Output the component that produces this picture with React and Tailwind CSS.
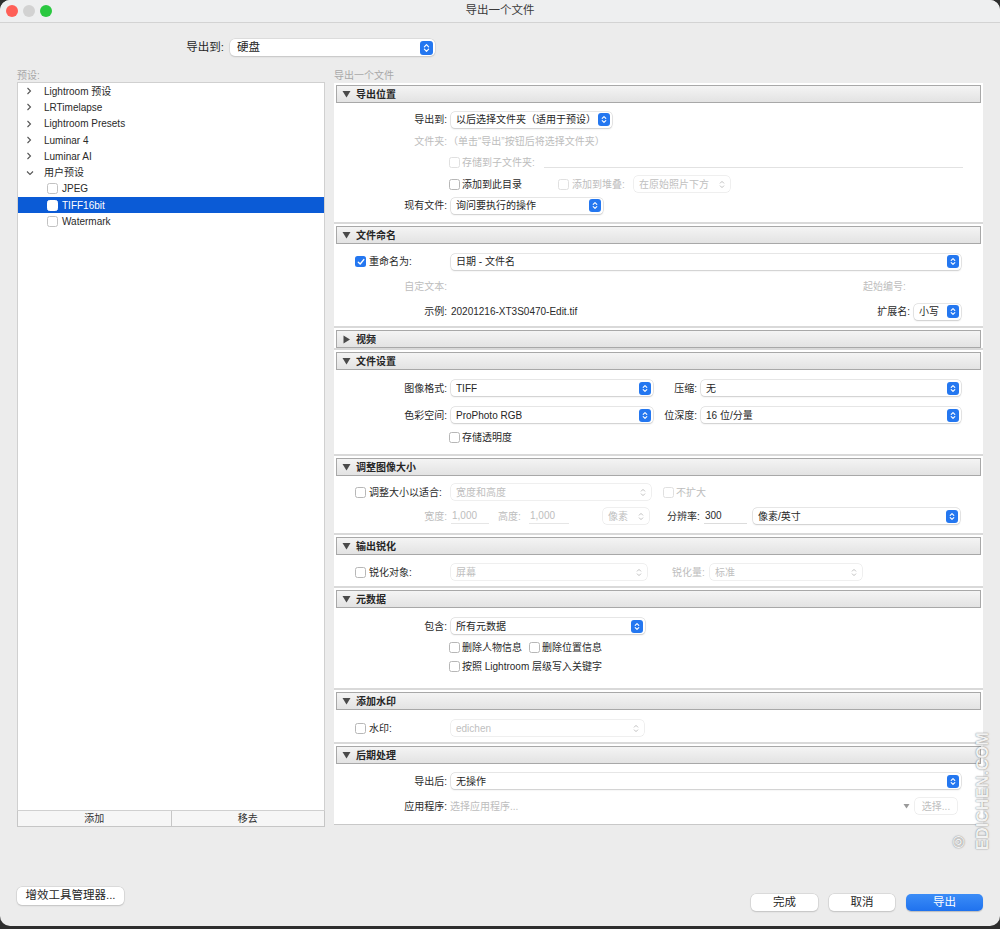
import React from "react";

const FONT = "font-['Liberation_Sans','Noto_Sans_CJK_SC',sans-serif]";

function Stepper({ disabled }) {
  if (disabled) {
    return (
      <svg width="6" height="9" viewBox="0 0 6 9" className="mr-[5px] shrink-0">
        <path d="M1 3.4 3 1.4 5 3.4M1 5.6 3 7.6 5 5.6" fill="none" stroke="#b8b8b8" strokeWidth="0.9" />
      </svg>
    );
  }
  return (
    <span className="mr-[2px] flex h-[13px] w-[12px] shrink-0 items-center justify-center rounded-[3px] bg-[#2477f0]">
      <svg width="6" height="9" viewBox="0 0 6 9">
        <path d="M1.2 3.4 3 1.6 4.8 3.4M1.2 5.6 3 7.4 4.8 5.6" fill="none" stroke="white" strokeWidth="1.1" strokeLinecap="round" strokeLinejoin="round" />
      </svg>
    </span>
  );
}

function Select({ value, w, disabled }) {
  return (
    <div
      className={`flex h-[16px] shrink-0 items-center justify-between rounded-[4px] bg-white pl-[5px] ${
        disabled
          ? "text-[#c0c0c0] shadow-[0_0_0_0.5px_#e0e0e0]"
          : "text-[#262626] shadow-[0_0_0_0.5px_#cdcdcd,0_1px_1.5px_rgba(0,0,0,0.18)]"
      } ${w}`}
    >
      <span className="truncate">{value}</span>
      <Stepper disabled={disabled} />
    </div>
  );
}

function Check({ checked, disabled }) {
  if (checked) {
    return (
      <span className="flex h-[11px] w-[11px] shrink-0 items-center justify-center rounded-[2.5px] bg-[#2477f0]">
        <svg width="8" height="8" viewBox="0 0 8 8">
          <path d="M1.3 4.2 3.2 6 6.8 1.6" fill="none" stroke="white" strokeWidth="1.4" strokeLinecap="round" strokeLinejoin="round" />
        </svg>
      </span>
    );
  }
  return (
    <span
      className={`block h-[11px] w-[11px] shrink-0 rounded-[2.5px] border bg-white ${
        disabled ? "border-[#e0e0e0]" : "border-[#b7b7b7]"
      }`}
    />
  );
}

function Label({ children, dim }) {
  return (
    <span className={`w-[115px] shrink-0 pr-[4px] text-right ${dim ? "text-[#bdbdbd]" : "text-[#2a2a2a]"}`}>
      {children}
    </span>
  );
}

function CheckLabel({ children, checked }) {
  return (
    <div className="flex w-[115px] shrink-0 items-center pl-[19px]">
      <Check checked={checked} />
      <span className="ml-[3px] text-[#2a2a2a]">{children}</span>
    </div>
  );
}

function Section({ title, open = true, children, body, last }) {
  return (
    <div className={`bg-white px-[2px] pt-[2px] ${last ? "border-b border-[#c8c8c8]" : "border-b-2 border-[#d9d9d9]"}`}>
      <div className="flex h-[18px] items-center border border-[#a8a8a8] bg-gradient-to-b from-[#f4f4f4] to-[#e3e3e3] pl-[5px]">
        {open ? (
          <svg width="9" height="8" viewBox="0 0 9 8">
            <path d="M0.5 1 8.5 1 4.5 7.5Z" fill="#4a4a4a" />
          </svg>
        ) : (
          <svg width="9" height="9" viewBox="0 0 9 9">
            <path d="M1.5 0.5 8 4.5 1.5 8.5Z" fill="#4a4a4a" />
          </svg>
        )}
        <span className="ml-[5px] text-[10px] font-bold text-[#262626]">{title}</span>
      </div>
      {open && <div className={body}>{children}</div>}
    </div>
  );
}

function Chevron({ down }) {
  return down ? (
    <svg width="8" height="6" viewBox="0 0 8 6">
      <path d="M1 1.5 4 4.5 7 1.5" fill="none" stroke="#555" strokeWidth="1.1" />
    </svg>
  ) : (
    <svg width="6" height="8" viewBox="0 0 6 8">
      <path d="M1.5 1 4.5 4 1.5 7" fill="none" stroke="#555" strokeWidth="1.1" />
    </svg>
  );
}

const TREE = [
  { name: "Lightroom 预设" },
  { name: "LRTimelapse" },
  { name: "Lightroom Presets" },
  { name: "Luminar 4" },
  { name: "Luminar AI" },
  { name: "用户预设", open: true },
];
const USER_PRESETS = ["JPEG", "TIFF16bit", "Watermark"];

function Button({ children, w, primary }) {
  return (
    <div
      className={`flex h-[17px] items-center justify-center rounded-[5px] text-[11.5px] ${w} ${
        primary
          ? "bg-gradient-to-b from-[#3b8cf7] to-[#1f72ee] text-white shadow-[0_1px_1px_rgba(0,0,0,0.2)]"
          : "bg-white text-[#262626] shadow-[0_0_0_0.5px_#c9c9c9,0_1px_1.5px_rgba(0,0,0,0.18)]"
      }`}
    >
      {children}
    </div>
  );
}

export default function App() {
  return (
    <div className={`h-[929px] w-[1000px] bg-[#2e2e2e] ${FONT}`}>
      <div className="relative flex h-[926px] flex-col overflow-hidden rounded-[10px] bg-[#ececec]">
        {/* Title bar */}
        <div className="relative flex h-[23px] shrink-0 items-center justify-center border-b border-[#d3d3d3] bg-[#eeeff0]">
          <div className="absolute left-[6px] top-[5px] flex gap-[5px]">
            <span className="h-[12px] w-[12px] rounded-full bg-[#fe5f57]" />
            <span className="h-[12px] w-[12px] rounded-full bg-[#d2d2d2]" />
            <span className="h-[12px] w-[12px] rounded-full bg-[#2ac840]" />
          </div>
          <span className="text-[11.5px] text-[#3a3a3a]">导出一个文件</span>
        </div>

        {/* Export to */}
        <div className="mt-[16px] flex h-[17px] items-center">
          <span className="w-[226px] pr-[2px] text-right text-[11.5px] text-[#262626]">导出到:</span>
          <div className="ml-[4px] flex h-[17px] w-[205px] items-center justify-between rounded-[5px] bg-white pl-[7px] text-[11.5px] text-[#262626] shadow-[0_0_0_0.5px_#cdcdcd,0_1px_1.5px_rgba(0,0,0,0.18)]">
            <span>硬盘</span>
            <span className="mr-[2px] flex h-[14px] w-[13px] items-center justify-center rounded-[3px] bg-[#2477f0]">
              <svg width="7" height="10" viewBox="0 0 7 10">
                <path d="M1.4 3.8 3.5 1.7 5.6 3.8M1.4 6.2 3.5 8.3 5.6 6.2" fill="none" stroke="white" strokeWidth="1.2" strokeLinecap="round" strokeLinejoin="round" />
              </svg>
            </span>
          </div>
        </div>

        <div className="mt-[12px] flex h-[14px] items-center text-[10px] text-[#a8a8a8]">
          <span className="ml-[17px] w-[317px]">预设:</span>
          <span>导出一个文件</span>
        </div>

        {/* Main */}
        <div className="flex pl-[17px]">
          {/* Presets tree */}
          <div className="flex h-[745px] w-[308px] flex-col">
            <div className="flex-1 border border-[#d0d0d0] bg-white text-[10px] text-[#2a2a2a]">
              {TREE.map((t) => (
                <div key={t.name} className="flex h-[16.3px] items-center">
                  <span className="flex w-[26px] justify-start pl-[8px]">
                    <Chevron down={t.open} />
                  </span>
                  <span>{t.name}</span>
                </div>
              ))}
              {USER_PRESETS.map((p) => {
                const sel = p === "TIFF16bit";
                return (
                  <div
                    key={p}
                    className={`flex h-[16.3px] items-center pl-[29px] ${sel ? "bg-[#0b5bd6] text-white" : ""}`}
                  >
                    <span
                      className={`h-[11px] w-[11px] rounded-[2.5px] border ${
                        sel ? "border-white bg-white" : "border-[#c2c2c2] bg-white"
                      }`}
                    />
                    <span className="ml-[4px]">{p}</span>
                  </div>
                );
              })}
            </div>
            <div className="flex h-[16px] border-x border-b border-[#c6c6c6] bg-[#f6f6f6] text-[10px] text-[#333]">
              <div className="flex flex-1 items-center justify-center border-r border-[#c6c6c6]">添加</div>
              <div className="flex flex-1 items-center justify-center">移去</div>
            </div>
          </div>

          {/* Settings */}
          <div className="ml-[9px] mt-[1px] w-[649px] text-[10px]">
            <Section title="导出位置" body="h-[119px] pt-[6px]">
              <div className="flex h-[21.5px] items-center">
                <Label>导出到:</Label>
                <Select value="以后选择文件夹（适用于预设）" w="w-[161px]" />
              </div>
              <div className="flex h-[21.5px] items-center">
                <Label dim>文件夹:</Label>
                <span className="-ml-[3px] text-[#bdbdbd]">（单击“导出”按钮后将选择文件夹）</span>
              </div>
              <div className="flex h-[21.5px] items-center pl-[113px]">
                <Check disabled />
                <span className="ml-[2px] w-[82px] text-[#bdbdbd]">存储到子文件夹:</span>
                <div className="mt-[10px] h-[1px] w-[419px] bg-[#e2e2e2]" />
              </div>
              <div className="flex h-[21.5px] items-center pl-[113px]">
                <Check />
                <span className="ml-[2px] w-[96px] text-[#2a2a2a]">添加到此目录</span>
                <Check disabled />
                <span className="ml-[3px] w-[62px] text-[#bdbdbd]">添加到堆叠:</span>
                <Select value="在原始照片下方" w="w-[96px]" disabled />
              </div>
              <div className="flex h-[21.5px] items-center">
                <Label>现有文件:</Label>
                <Select value="询问要执行的操作" w="w-[152px]" />
              </div>
            </Section>

            <Section title="文件命名" body="h-[82px] pt-[5px]">
              <div className="flex h-[25px] items-center">
                <CheckLabel checked>重命名为:</CheckLabel>
                <Select value="日期 - 文件名" w="w-[510px]" />
              </div>
              <div className="flex h-[25px] items-center text-[#bdbdbd]">
                <Label dim>自定文本:</Label>
                <span className="ml-[412px]">起始编号:</span>
              </div>
              <div className="flex h-[25px] items-center">
                <Label>示例:</Label>
                <span className="w-[418px] text-[#2a2a2a]">20201216-XT3S0470-Edit.tif</span>
                <span className="w-[41px] text-right text-[#2a2a2a]">扩展名:</span>
                <span className="ml-[4px] flex">
                  <Select value="小写" w="w-[47px]" />
                </span>
              </div>
            </Section>

            <Section title="视频" open={false} />

            <Section title="文件设置" body="h-[84px] pt-[7px]">
              <div className="flex h-[22px] items-center">
                <Label>图像格式:</Label>
                <Select value="TIFF" w="w-[202px]" />
                <span className="w-[48px] pr-[4px] text-right text-[#2a2a2a]">压缩:</span>
                <Select value="无" w="w-[260px]" />
              </div>
              <div className="mt-[5px] flex h-[22px] items-center">
                <Label>色彩空间:</Label>
                <Select value="ProPhoto RGB" w="w-[202px]" />
                <span className="w-[48px] pr-[4px] text-right text-[#2a2a2a]">位深度:</span>
                <Select value="16 位/分量" w="w-[260px]" />
              </div>
              <div className="flex h-[22px] items-center pl-[113px]">
                <Check />
                <span className="ml-[2px] text-[#2a2a2a]">存储透明度</span>
              </div>
            </Section>

            <Section title="调整图像大小" body="h-[57px] pt-[5px]">
              <div className="flex h-[22px] items-center">
                <CheckLabel>调整大小以适合:</CheckLabel>
                <Select value="宽度和高度" w="w-[200px]" disabled />
                <span className="ml-[12px] flex">
                  <Check disabled />
                </span>
                <span className="ml-[2px] text-[#bdbdbd]">不扩大</span>
              </div>
              <div className="mt-[2px] flex h-[22px] items-center text-[#bdbdbd]">
                <Label dim>宽度:</Label>
                <span className="h-[16px] w-[38px] border-b border-[#e6e6e6] pl-[1px] leading-[16px]">1,000</span>
                <span className="ml-[9px] w-[31px]">高度:</span>
                <span className="h-[16px] w-[40px] border-b border-[#e6e6e6] pl-[1px] leading-[16px]">1,000</span>
                <span className="ml-[34px] flex">
                  <Select value="像素" w="w-[46px]" disabled />
                </span>
                <span className="ml-[18px] w-[37px] text-[#2a2a2a]">分辨率:</span>
                <span className="h-[16px] w-[43px] border-b border-[#dcdcdc] bg-white pl-[1px] leading-[16px] text-[#2a2a2a]">300</span>
                <span className="ml-[6px] flex">
                  <Select value="像素/英寸" w="w-[207px]" />
                </span>
              </div>
            </Section>

            <Section title="输出锐化" body="h-[31px] pt-[6px]">
              <div className="flex h-[22px] items-center">
                <CheckLabel>锐化对象:</CheckLabel>
                <Select value="屏幕" w="w-[196px]" disabled />
                <span className="ml-[25px] w-[38px] text-[#bdbdbd]">锐化量:</span>
                <Select value="标准" w="w-[152px]" disabled />
              </div>
            </Section>

            <Section title="元数据" body="h-[80px] pt-[7px]">
              <div className="flex h-[22px] items-center">
                <Label>包含:</Label>
                <Select value="所有元数据" w="w-[194px]" />
              </div>
              <div className="flex h-[20px] items-center pl-[113px] text-[#2a2a2a]">
                <Check />
                <span className="ml-[2px] w-[67px]">删除人物信息</span>
                <Check />
                <span className="ml-[2px]">删除位置信息</span>
              </div>
              <div className="flex h-[19px] items-center pl-[113px] text-[#2a2a2a]">
                <Check />
                <span className="ml-[2px]">按照 Lightroom 层级写入关键字</span>
              </div>
            </Section>

            <Section title="添加水印" body="h-[32px] pt-[7px]">
              <div className="flex h-[22px] items-center">
                <CheckLabel>水印:</CheckLabel>
                <Select value="edichen" w="w-[193px]" disabled />
              </div>
            </Section>

            <Section title="后期处理" body="h-[60px] pt-[6px]" last>
              <div className="flex h-[22px] items-center">
                <Label>导出后:</Label>
                <Select value="无操作" w="w-[510px]" />
              </div>
              <div className="mt-[3px] flex h-[22px] items-center">
                <Label>应用程序:</Label>
                <span className="-ml-[1px] w-[451px] text-[#bdbdbd]">选择应用程序...</span>
                <svg width="7" height="6" viewBox="0 0 7 6" className="ml-[2px]">
                  <path d="M0.5 1 6.5 1 3.5 5.5Z" fill="#9a9a9a" />
                </svg>
                <span className="ml-[5px] flex h-[16px] w-[42px] items-center justify-center rounded-[4px] bg-white text-[#c0c0c0] shadow-[0_0_0_0.5px_#e0e0e0]">
                  选择...
                </span>
              </div>
            </Section>
          </div>
        </div>

        {/* Footer */}
        <div className="mt-[60px] flex items-start justify-between px-[17px]">
          <div className="flex h-[18px] w-[107px] items-center justify-center rounded-[5px] bg-white text-[11.5px] text-[#262626] shadow-[0_0_0_0.5px_#c9c9c9,0_1px_1.5px_rgba(0,0,0,0.18)]">
            增效工具管理器...
          </div>
          <div className="mt-[7px] flex gap-[11px]">
            <Button w="w-[67px]">完成</Button>
            <Button w="w-[66px]">取消</Button>
            <Button w="w-[77px]" primary>导出</Button>
          </div>
        </div>

        {/* Watermark overlay */}
        <div className="absolute left-[961px] top-[724px] flex h-[126px] w-[20px] rotate-180 items-center justify-center text-[16px] font-bold tracking-[0.4px] text-[#f2f2f2] [text-shadow:0_0_1.5px_rgba(0,0,0,0.6)] [writing-mode:vertical-rl]">
          © EDICHEN.COM
        </div>
      </div>
    </div>
  );
}
